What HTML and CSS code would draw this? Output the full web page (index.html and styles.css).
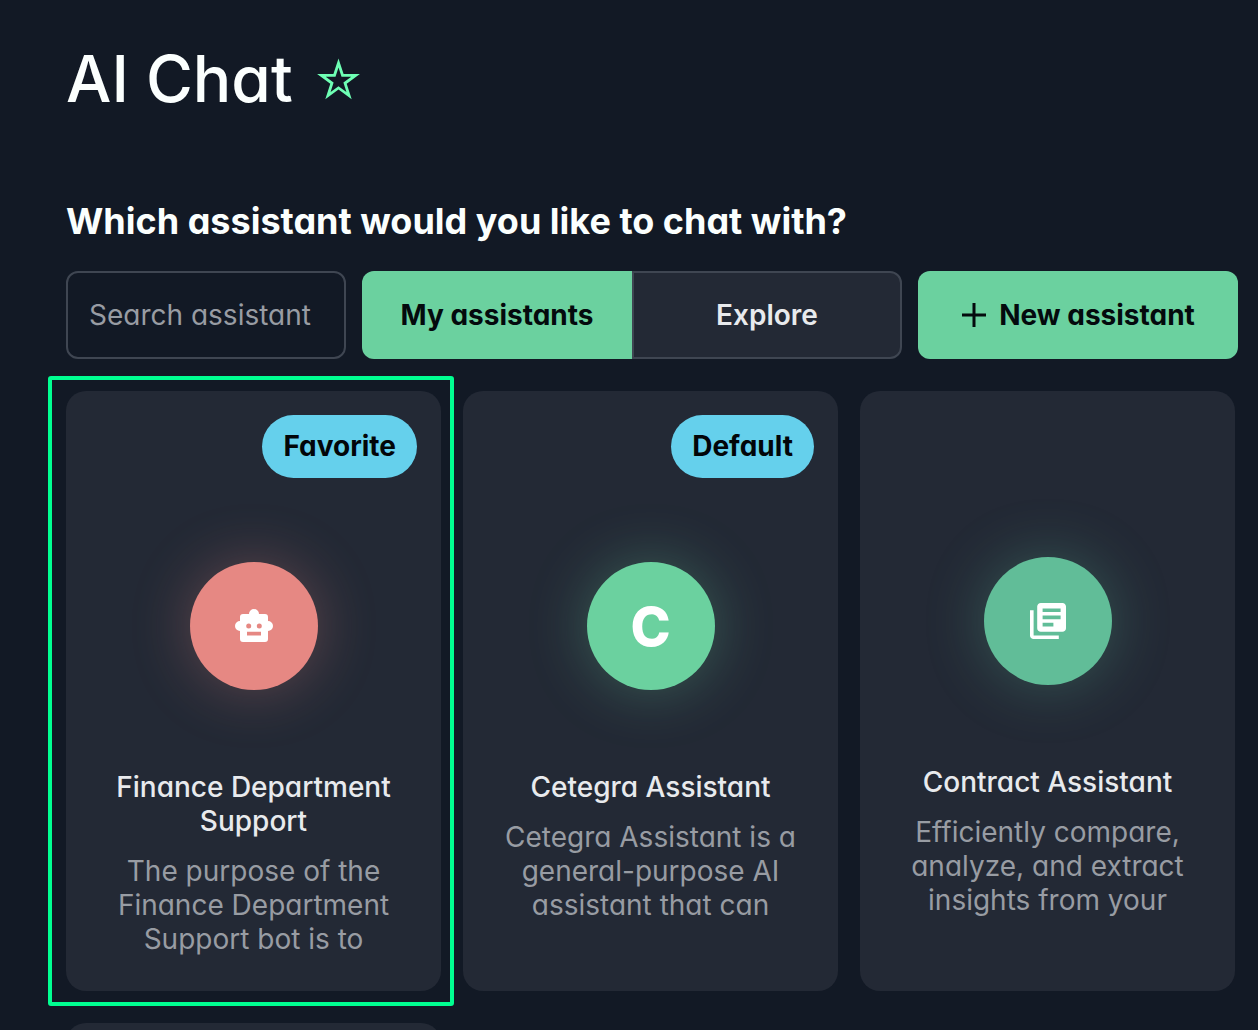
FILE: index.html
```html
<!DOCTYPE html>
<html lang="en">
<head>
<meta charset="utf-8">
<meta name="viewport" content="width=device-width, initial-scale=1">
<title>AI Chat</title>
<link rel="stylesheet" href="styles.css">
</head>
<body>
<main class="page">
  <header class="page-header">
    <h1 class="title">AI Chat</h1>
    <button class="star-button" type="button" aria-label="Add to favorites">
      <svg class="star" viewBox="0 0 44 44" aria-hidden="true"><path fill-rule="evenodd" d="M21.500 1.500L26.600 17H42.900L29.700 26.700L34.700 42.200L21.500 32.600L8.300 42.200L13.300 26.700L.1 17H16.400zM21.500 10.500L18.500 19.800H8.700L16.600 25.600L13.600 34.900L21.500 29.200L29.400 34.900L26.400 25.600L34.300 19.800H24.500z"/></svg>
    </button>
  </header>
  <h2 class="question">Which assistant would you like to chat with?</h2>
  <div class="toolbar">
    <input class="search" type="text" placeholder="Search assistant" aria-label="Search assistant">
    <div class="tabs">
      <button class="tab tab-active" type="button">My assistants</button>
      <button class="tab" type="button">Explore</button>
    </div>
    <button class="new-button" type="button">
      <svg class="plus" viewBox="0 0 26 26" aria-hidden="true"><path d="M13 1v24M1 13h24"/></svg>
      New assistant
    </button>
  </div>
  <section class="cards">
    <article class="card card-selected">
      <span class="badge">Favorite</span>
      <div class="avatar avatar-red">
        <svg class="robot" viewBox="0 0 38 34" aria-hidden="true"><path fill-rule="evenodd" d="M14 5a5 5 0 0 1 10 0h6a3 3 0 0 1 3 3v4a5 5 0 0 1 0 10v8a3 3 0 0 1-3 3H8a3 3 0 0 1-3-3v-8a5 5 0 0 1 0-10V8a3 3 0 0 1 3-3zM13.700 14.500a2.500 2.500 0 1 0 0 5 2.500 2.500 0 0 0 0-5zM24.300 14.500a2.500 2.500 0 1 0 0 5 2.500 2.500 0 0 0 0-5zM12 22.700v3.700h14v-3.700z"/></svg>
      </div>
      <h3 class="name">Finance Department Support</h3>
      <p class="description">The purpose of the Finance Department Support bot is to</p>
    </article>
    <article class="card">
      <span class="badge">Default</span>
      <div class="avatar avatar-green">C</div>
      <h3 class="name">Cetegra Assistant</h3>
      <p class="description">Cetegra Assistant is a general-purpose AI assistant that can</p>
    </article>
    <article class="card">
      <div class="avatar avatar-teal">
        <svg class="library" viewBox="2 2 20 20" aria-hidden="true"><path d="M4 6H2v14c0 1.100.9 2 2 2h14v-2H4V6zm16-4H8c-1.100 0-2 .9-2 2v12c0 1.100.9 2 2 2h12c1.100 0 2-.9 2-2V4c0-1.100-.9-2-2-2zm-1 9H9V9h10v2zm-4 4H9v-2h6v2zm4-8H9V5h10v2z"/></svg>
      </div>
      <h3 class="name">Contract Assistant</h3>
      <p class="description">Efficiently compare, analyze, and extract insights from your</p>
    </article>
    <article class="card"></article>
  </section>
</main>
</body>
</html>
```
FILE: styles.css
```css
* { box-sizing: border-box; }
body {
  margin: 0;
  height: 100vh;
  overflow: hidden auto;
  scrollbar-width: none;
  background: #121925;
  color: #fbfffe;
  font-family: Inter, "Liberation Sans", sans-serif;
  font-feature-settings: "cv11";
}
button, input { font: inherit; font-feature-settings: inherit; }
button { cursor: pointer; }
.page { padding: 38px 20px 0 66px; }
.page-header { display: flex; align-items: center; gap: 24px; height: 82px; }
.title { margin: 0; font-size: 64px; font-weight: 500; line-height: 78px; }
.star-button { display: flex; padding: 0; border: 0; background: none; }
.star { width: 44px; height: 44px; fill: #6effb4; }
.question { margin: 80px 0 28px; font-size: 36px; font-weight: 700; line-height: 43px; }
.toolbar { display: grid; grid-template-columns: 280fr 540fr 320fr; gap: 16px; height: 88px; }
.search {
  min-width: 0;
  padding: 0 21px;
  border: 2px solid #3f4652;
  border-radius: 12px;
  background: transparent;
  color: #fff;
  font-size: 28px;
}
.search::placeholder { color: #989ca3; opacity: 1; }
.tabs { display: grid; grid-template-columns: 1fr 1fr; }
.tab {
  padding: 0;
  border: 2px solid #3f4652;
  border-radius: 0 12px 12px 0;
  background: #232935;
  color: #e8eaed;
  font-size: 28px;
  font-weight: 600;
}
.tab-active { border: 0; border-radius: 12px 0 0 12px; background: #6bd19f; color: #040a0d; font-weight: 700; }
.new-button {
  display: flex;
  align-items: center;
  justify-content: center;
  gap: 12px;
  padding: 0;
  border: 0;
  border-radius: 12px;
  background: #6bd19f;
  color: #040a0d;
  font-size: 28px;
  font-weight: 700;
}
.plus { width: 26px; height: 26px; fill: none; stroke: currentColor; stroke-width: 3; }
.cards {
  display: grid;
  grid-template-columns: repeat(3, 1fr);
  grid-auto-rows: minmax(600px, auto);
  gap: 32px 22px;
  margin: 32px 3px 0 0;
}
.card {
  position: relative;
  display: flex;
  flex-direction: column;
  align-items: center;
  padding: 24px;
  border-radius: 20px;
  background: #232935;
  text-align: center;
}
.card-selected::before {
  content: "";
  position: absolute;
  inset: -15px -13px -15px -18px;
  border: 4px solid #00ff91;
  border-radius: 3px;
}
.badge {
  align-self: flex-end;
  padding: 0 21px;
  border-radius: 32px;
  background: #65d0ec;
  color: #020609;
  font-size: 28px;
  font-weight: 700;
  line-height: 63px;
}
.avatar {
  display: flex;
  align-items: center;
  justify-content: center;
  flex: none;
  width: 128px;
  height: 128px;
  margin-top: 142px;
  border-radius: 50%;
  color: #fff;
  font-size: 54px;
  font-weight: 800;
}
.badge + .avatar { margin-top: 84px; }
.avatar-red { background: #e68883; box-shadow: 0 0 60px #e6888350; }
.avatar-green { background: #6bd19f; box-shadow: 0 0 60px #6bd19f50; }
.avatar-teal { background: #61bd98; box-shadow: 0 0 60px #61bd9850; }
.avatar svg { fill: #fff; }
.robot { width: 38px; height: 34px; }
.library { width: 36px; height: 36px; }
.name { max-width: 295px; margin: 80px 0 16px; color: #e8eaed; font-size: 28px; font-weight: 500; line-height: 34px; }
.description { max-width: 295px; margin: 0; color: #989ca3; font-size: 28px; line-height: 34px; }
```
